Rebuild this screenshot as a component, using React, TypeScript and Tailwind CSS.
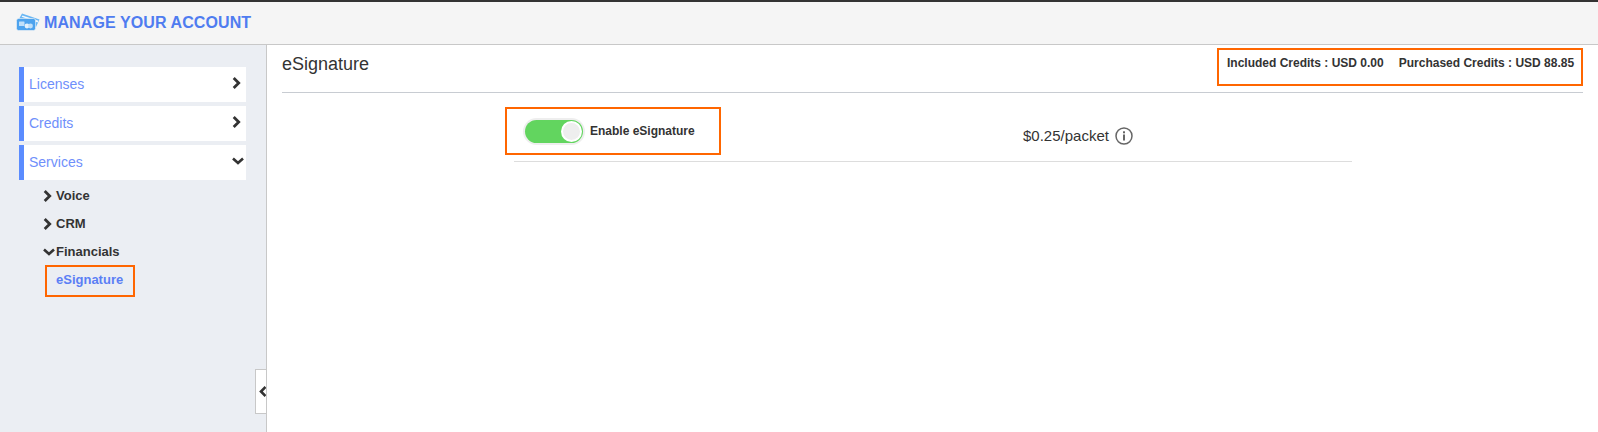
import React from 'react';

const FONT = "font-['Liberation_Sans',Arial,sans-serif]";

const CardsIcon: React.FC = () => (
    <svg width="24" height="18" viewBox="0 0 24 18" className="mb-[2px] shrink-0">
        <path d="M6 0.5 L23.5 6.5 L20 14 L3 6 Z" fill="#6ab7f4" />
        <path d="M6.5 2.4 L22.5 7.8 L21.7 9.4 L5.6 3.8 Z" fill="#f2f8fe" />
        <rect x="0.5" y="5.5" width="19" height="12" rx="2" fill="#4da3ee" stroke="#f5f5f5" strokeWidth="0.6" />
        <rect x="3" y="8.5" width="5.5" height="4.5" rx="0.5" fill="#bfe0fa" />
        <circle cx="11" cy="13" r="2.4" fill="#e3f1fc" />
        <circle cx="14.5" cy="13" r="2.4" fill="#bfe0fa" />
    </svg>
);

const ChevronRight: React.FC<{ className?: string }> = ({ className }) => (
    <svg width="9" height="12" viewBox="0 0 9 12" className={className}>
        <polyline points="1.7,1 6.7,6 1.7,11" fill="none" stroke="currentColor" strokeWidth="2.8" />
    </svg>
);

const ChevronDown: React.FC<{ className?: string }> = ({ className }) => (
    <svg width="12" height="8" viewBox="0 0 12 8" className={className}>
        <polyline points="1,1.5 6,6 11,1.5" fill="none" stroke="currentColor" strokeWidth="2.6" />
    </svg>
);

const NavItem: React.FC<{ label: string; open?: boolean }> = ({ label, open }) => (
    <div className="flex h-[35px] items-center justify-between border-l-[5px] border-[#5b8cff] bg-white pl-[5px]">
        <span className="text-[14px] text-[#6f8ffb]">{label}</span>
        {open ? (
            <ChevronDown className="mr-[2px] mb-[4px] text-[#333]" />
        ) : (
            <ChevronRight className="mr-[5px] mb-[3px] text-[#333]" />
        )}
    </div>
);

const SubItem: React.FC<{ label: string; open?: boolean }> = ({ label, open }) => (
    <div className="flex h-[28px] items-center pt-[1px] text-[13px] font-bold text-[#333]">
        <span className="flex w-[13px] shrink-0 justify-start">
            {open ? <ChevronDown className="mt-[1px]" /> : <ChevronRight />}
        </span>
        <span>{label}</span>
    </div>
);

const Toggle: React.FC = () => (
    <div className="flex h-[27px] w-[62px] items-center justify-center rounded-full bg-[#eeeeee]">
        <div className="flex h-[23px] w-[58px] items-center justify-end rounded-full bg-[#62d55f] pr-[1px]">
            <div className="h-[21px] w-[21px] rounded-full border-[2px] border-white bg-[#eeeeee]" />
        </div>
    </div>
);

const InfoIcon: React.FC = () => (
    <svg width="18" height="18" viewBox="0 0 18 18" className="mb-[1px] text-[#666]">
        <circle cx="9" cy="9" r="8" fill="none" stroke="currentColor" strokeWidth="1.5" />
        <rect x="8" y="7.5" width="2" height="6" fill="currentColor" />
        <rect x="8" y="4.3" width="2" height="2" fill="currentColor" />
    </svg>
);

const App: React.FC = () => {
    return (
        <div className={`${FONT} flex h-[432px] w-[1598px] flex-col overflow-hidden bg-white`}>
            <header className="flex h-[45px] items-center gap-[4px] border-t-[2px] border-b border-t-[#333] border-b-[#c8c8c8] bg-[#f5f5f5] pl-[16px]">
                <CardsIcon />
                <h1 className="mb-[1px] text-[16px] font-bold tracking-[0.1px] text-[#4f7cf0]">MANAGE YOUR ACCOUNT</h1>
            </header>

            <div className="flex flex-1">
                <aside className="relative w-[267px] shrink-0 border-r border-[#c8c8c8] bg-[#ebeef3] pt-[22px] pl-[19px]">
                    <div className="flex w-[227px] flex-col gap-[4px]">
                        <NavItem label="Licenses" />
                        <NavItem label="Credits" />
                        <NavItem label="Services" open />
                    </div>
                    <div className="mt-[1px] pl-[24px]">
                        <SubItem label="Voice" />
                        <SubItem label="CRM" />
                        <SubItem label="Financials" open />
                    </div>
                    <div className="ml-[26px] flex h-[32px] w-[90px] items-center border-[2px] border-[#ff6600] pb-[2px] pl-[9px] text-[13px] font-bold text-[#5b7ff5]">
                        eSignature
                    </div>
                    <div className="absolute top-[324px] right-0 flex h-[45px] w-[11px] items-center overflow-hidden border border-r-0 border-[#c8c8c8] bg-white pl-[3px]">
                        <svg width="8" height="11" viewBox="0 0 8 11" className="shrink-0 text-[#333]">
                            <polyline points="6.5,1 2,5.5 6.5,10" fill="none" stroke="currentColor" strokeWidth="2.6" />
                        </svg>
                    </div>
                </aside>

                <main className="min-w-0 flex-1 pl-[15px] pr-[15px] pt-[2px]">
                    <div className="flex h-[46px] items-start justify-between border-b border-[#c8ccd2]">
                        <h2 className="mt-[7px] text-[18px] leading-[20px] text-[#333]">eSignature</h2>
                        <div className="mt-[1px] flex h-[38px] w-[366px] gap-[15px] whitespace-nowrap border-[2px] border-[#ff6600] pl-[8px] pt-[5px] text-[12px] font-bold leading-[16px] text-[#333]">
                            <span>Included Credits : USD 0.00</span>
                            <span>Purchased Credits : USD 88.85</span>
                        </div>
                    </div>

                    <div className="ml-[232px] mt-[14px] flex h-[55px] w-[838px] items-start border-b border-[#dddddd]">
                        <div className="-ml-[9px] flex h-[48px] w-[216px] shrink-0 items-center gap-[5px] border-[2px] border-[#ff6600] pl-[16px] text-[12px] font-bold text-[#333]">
                            <Toggle />
                            <span>Enable eSignature</span>
                        </div>
                        <div className="ml-[302px] flex h-[48px] items-center gap-[6px] pt-[11px] text-[15px] text-[#333]">
                            <span>$0.25/packet</span>
                            <InfoIcon />
                        </div>
                    </div>
                </main>
            </div>
        </div>
    );
};

export default App;
